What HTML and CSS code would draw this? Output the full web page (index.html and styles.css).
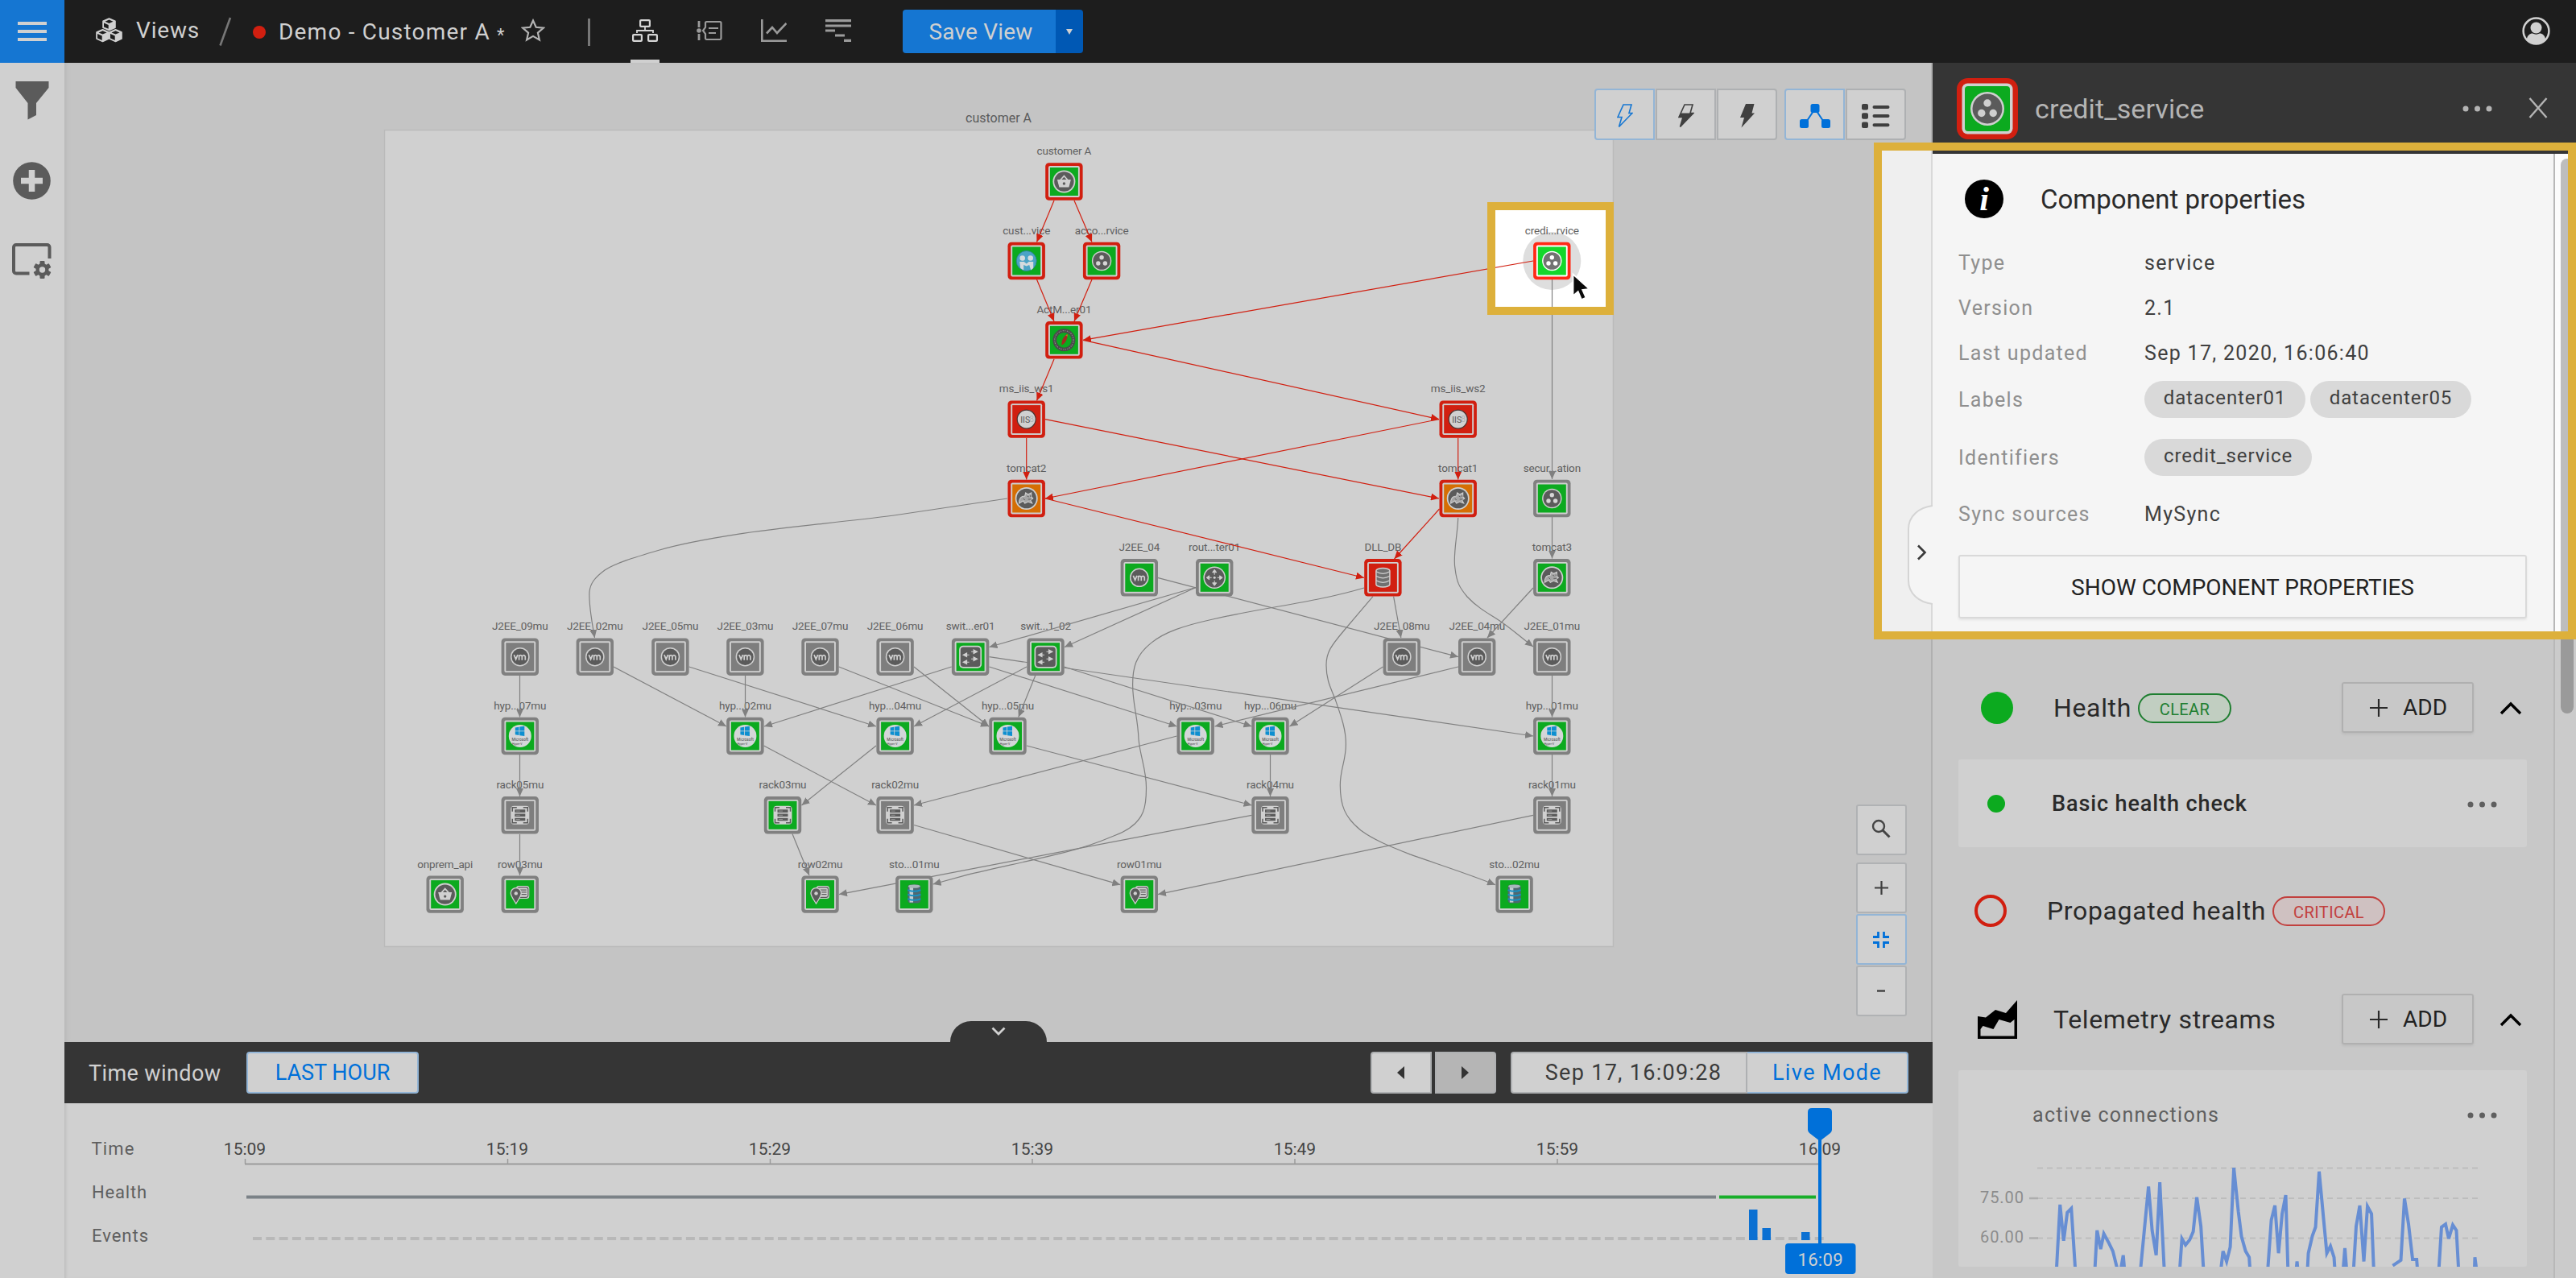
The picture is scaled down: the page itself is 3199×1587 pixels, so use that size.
FILE: index.html
```html
<!DOCTYPE html>
<html lang="en">
<head>
<meta charset="utf-8">
<title>Demo - Customer A</title>
<link rel="stylesheet" href="styles.css">
</head>
<body>
<header class="topbar">
  <button class="menu" aria-label="Menu"><span></span><span></span><span></span></button>
  <svg class="cubes" width="33" height="31" viewBox="0 0 33 31"><g fill="#d0d0d0" stroke="#d0d0d0" stroke-width="1.6" stroke-linejoin="round"><path d="M16.500 1l7.500 3.300v8l-7.500 3.300-7.500-3.300v-8z"/><path d="M8.500 14.700l7.500 3.300v8l-7.500 3.500L1 26v-8z"/><path d="M24.500 14.700l7.500 3.300v8l-7.500 3.500-7.500-3.500v-8z"/></g><g fill="#1d1d1d"><path d="M16.500 2.600l5 2.200-5 2.200-5-2.200zM10 6.500l5.700 2.500v4.800L10 11.500zM8.500 16.200l5 2.200-5 2.200-5-2.200zM2 20l5.700 2.500v5.500L2 25.500zM24.500 16.200l5 2.200-5 2.200-5-2.200zM18 20l5.700 2.500v5.500L18 25.500z"/></g></svg>
  <span class="views">Views</span>
  <svg class="slash" width="16" height="36" viewBox="0 0 16 36"><path d="M1.500 35.500L14 1" stroke="#777" stroke-width="2.600"/></svg>
  <span class="status-dot"></span>
  <span class="view-name">Demo - Customer A <small>*</small></span>
  <svg class="star" width="30" height="30" viewBox="0 0 30 30"><path d="M15 2.500l3.700 8.300 9 .9-6.800 6 2 8.800L15 21.900l-7.900 4.600 2-8.800-6.800-6 9-.9z" fill="none" stroke="#b4b4b4" stroke-width="2.200"/></svg>
  <span class="divider"></span>
  <nav class="tabs">
    <span class="tab active"><svg width="32" height="28" viewBox="0 0 32 28" fill="none" stroke="#d6d6d6" stroke-width="2.200"><rect x="10.100" y="1.100" width="11.800" height="7.800" rx="1"/><rect x="1.100" y="19.100" width="10.800" height="7.800" rx="1"/><rect x="20.100" y="19.100" width="10.800" height="7.800" rx="1"/><path d="M16 10v4M6 17v-3h20v3" stroke-width="1.800"/></svg></span>
    <span class="tab"><svg width="32" height="28" viewBox="0 0 32 28" fill="none" stroke="#9b9b9b" stroke-width="2.200"><path d="M3 2v8M3 18v8" stroke-width="2.800"/><circle cx="3" cy="14" r="2.800" fill="#9b9b9b" stroke="none"/><path d="M11 10V4.500a1.500 1.500 0 0 1 1.500-1.500H29a1.500 1.500 0 0 1 1.500 1.500v19a1.500 1.500 0 0 1-1.500 1.500H12.500a1.500 1.500 0 0 1-1.500-1.500V18l-3-4z"/><path d="M15 11h12M15 17h9"/></svg></span>
    <span class="tab"><svg width="32" height="28" viewBox="0 0 32 28" fill="none" stroke="#9b9b9b" stroke-width="2.600"><path d="M1.300 0v26.700H32"/><path d="M7 17.500l7-7.500 6 7L31.500 5"/></svg></span>
    <span class="tab"><svg width="32" height="28" viewBox="0 0 32 28" stroke="#9b9b9b" stroke-width="3.200"><path d="M0 1.600h32M0 8h32M0 14h12M12 20h12M23 26.300h9"/></svg></span>
  </nav>
  <div class="save"><span class="save-main">Save View</span><span class="save-more"><svg width="8" height="7" viewBox="0 0 8 7"><path d="M0 0h8L4 7z" fill="#d0d0d0"/></svg></span></div>
  <svg class="user" width="35" height="35" viewBox="0 0 35 35"><circle cx="17.500" cy="17.500" r="15.900" fill="none" stroke="#d0d0d0" stroke-width="2.500"/><circle cx="17.500" cy="13.500" r="7" fill="#d0d0d0"/><path d="M6 28c0-5 4-7.500 7-7.500 3 1.500 6 1.500 9 0 3 0 7 2.500 7 7.500-6 7-17 7-23 0z" fill="#d0d0d0"/></svg>
</header>

<div class="workspace">
  <aside class="sidebar">
    <svg width="42" height="48" viewBox="0 0 42 48"><path d="M.5 0h41v8L26 27v15l-10.500 5.500V27L.5 8z" fill="#5b5b5b"/></svg>
    <svg width="47" height="47" viewBox="0 0 47 47"><circle cx="23.500" cy="23.500" r="23.300" fill="#5b5b5b"/><path d="M23.500 10v27M10 23.500h27" stroke="#d0d0d0" stroke-width="7.500"/></svg>
    <svg width="49" height="44" viewBox="0 0 49 44"><path d="M21.500 37.500H5a3 3 0 0 1-3-3V5a3 3 0 0 1 3-3h38.500a3 3 0 0 1 3 3v14" fill="none" stroke="#5b5b5b" stroke-width="4"/><g transform="translate(37.500 33)" fill="#5b5b5b"><circle r="8"/><g id="teeth"><rect x="-3" y="-11" width="6" height="22" rx="1"/></g><use href="#teeth" transform="rotate(60)"/><use href="#teeth" transform="rotate(120)"/><circle r="3.700" fill="#d0d0d0"/></g></svg>
  </aside>

  <main class="center">
    <section class="canvas">
      <svg class="topology" width="2320" height="1216" viewBox="80 78 2320 1216">
        <defs>
          <marker id="ar" viewBox="0 0 10 9" refX="10" refY="4.500" markerWidth="10" markerHeight="9" markerUnits="userSpaceOnUse" orient="auto"><path d="M0 0l10 4.500L0 9z" fill="#d11f10"/></marker>
          <marker id="ag" viewBox="0 0 10 9" refX="10" refY="4.500" markerWidth="10" markerHeight="9" markerUnits="userSpaceOnUse" orient="auto"><path d="M0 0l10 4.500L0 9z" fill="#808080"/></marker>
          <g id="red"><rect x="-23.200" y="-23.200" width="46.400" height="46.400" rx="4.500" fill="#d11f10"/><rect x="-19.400" y="-19.400" width="38.800" height="38.800" rx="2" fill="#d0d0d0"/></g>
          <g id="gray"><rect x="-23.200" y="-23.200" width="46.400" height="46.400" rx="4.500" fill="#808080"/><rect x="-19.400" y="-19.400" width="38.800" height="38.800" rx="2" fill="#d0d0d0"/></g>
          <rect id="sq" x="-17.500" y="-17.500" width="35" height="35"/>
          <g id="gg"><use href="#gray"/><use href="#sq" fill="#0caa1f"/></g>
          <g id="gx"><use href="#gray"/><use href="#sq" fill="#7e7e7e"/></g>
          <g id="rg"><use href="#red"/><use href="#sq" fill="#0caa1f"/></g>
          <g id="rr"><use href="#red"/><use href="#sq" fill="#d11f10"/></g>
          <g id="ro"><use href="#red"/><use href="#sq" fill="#d56e04"/></g>
          <g id="vm"><circle r="11.800" fill="#d0d0d0"/><circle r="10.300" fill="#5b5b5b"/><path d="M-7.500-2.500l2.300 5.500 2.300-5.500M-1.200 4v-6.500M-1.200-.5q2-3 3.700 0V4M2.500-.5q2.200-3 4 0V4" fill="none" stroke="#d0d0d0" stroke-width="1.700"/></g>
          <g id="hv"><circle r="14" fill="#d4d6d8"/><path d="M-6-10.500l4.700-.8v4.800H-6zM-.5-11.400l6-.9v5.800h-6zM-6-5.700h4.700v4.800L-6-1.700zM-.5-5.700h6V.1l-6-.9z" fill="#0d8fd0"/><text y="6" class="tiny">Microsoft</text><text x="-3.500" y="10.500" class="tiny s">Hyper-V</text></g>
          <g id="rk"><rect x="-11.500" y="-11.500" width="23" height="23" rx="4" fill="#d0d0d0"/><path d="M-4-9.500h-5.500v5M4-9.500h5.500v5M-4 9.500h-5.500v-5M4 9.500h5.500v-5" fill="none" stroke="#5b5b5b" stroke-width="1.500"/><path d="M-6.500-5.200h13M-6.500 0h13M-6.500 5.200h13" stroke="#5b5b5b" stroke-width="3.600"/><path d="M-5-5.200h5M-5 0h5M-5 5.200h5" stroke="#b0b0b0" stroke-width=".7"/></g>
          <g id="bk"><circle r="14" fill="#d0d0d0"/><circle r="12.200" fill="#5b5b5b"/><path d="M-8.500-2.500h17L6 7H-6z" fill="#d0d0d0"/><path d="M-4.500-2L0-7l4.500 5" fill="none" stroke="#d0d0d0" stroke-width="1.700"/><circle cy="2.500" r="1.700" fill="#5b5b5b"/></g>
          <g id="sv"><circle r="12.200" fill="#d0d0d0"/><circle r="10.800" fill="#5b5b5b"/><g fill="#d6d6d6"><circle cy="-4.300" r="2.700"/><circle cx="-4.300" cy="3" r="2.700"/><circle cx="4.300" cy="3" r="2.700"/></g></g>
          <g id="rw"><rect x="-5" y="-10.500" width="16.500" height="16" rx="3.500" fill="#d0d0d0"/><rect x="-3" y="-8.800" width="13" height="12.500" rx="2.500" fill="none" stroke="#5b5b5b" stroke-width="1.200"/><path d="M0-5.500h8M0-2.800h8M0 0h8" stroke="#5b5b5b" stroke-width="1.300"/><path d="M-5 11.500C-9 5-11.500 2-11.500-1.500a6.500 6.500 0 0 1 13 0C1.500 2-1 5-5 11.500z" fill="#5b5b5b" stroke="#d0d0d0" stroke-width="1.300"/><circle cx="-5" cy="-1.200" r="2.200" fill="#d0d0d0"/></g>
          <g id="st"><rect x="-8" y="-12" width="16" height="23" rx="4" fill="#4f6871"/><path d="M-3.500-11v21" stroke="#c3cdd1" stroke-width="4.500"/><path d="M-8-5.500q8 3.500 16 0M-8 0q8 3.500 16 0M-8 5.500q8 3.500 16 0" fill="none" stroke="#1691c4" stroke-width="2"/><ellipse cy="-10" rx="7.500" ry="2.200" fill="#a9b7bb"/></g>
          <g id="db"><path d="M-8.500-8.500a8.500 3.200 0 0 1 17 0v17a8.500 3.200 0 0 1-17 0z" fill="#707070" stroke="#d0d0d0" stroke-width="1.500"/><path d="M-8.500-7.500q8.500 5 17 0M-8.500-2q8.500 5 17 0M-8.500 3.500q8.500 5 17 0" fill="none" stroke="#d0d0d0" stroke-width="1.300"/></g>
          <g id="sw"><rect x="-14" y="-14" width="28" height="28" rx="5" fill="#d0d0d0"/><rect x="-12.300" y="-12.300" width="24.600" height="24.600" rx="3.500" fill="#5b5b5b"/><path d="M1-6.500h3v-2.200L8.500-6.500 4-4.200v-2.300M1 2.500h3V.3l4.500 2.200L4 4.800V2.500M-1.500-2.500h-3v-2.200L-9-2.500l4.500 2.300v-2.300M-1.500 6.500h-3V4.300L-9 6.500l4.500 2.300V6.500" fill="#d0d0d0" stroke="#d0d0d0" stroke-width="1.100"/></g>
          <g id="rt"><circle r="13.800" fill="#d0d0d0"/><circle r="12.300" fill="#5b5b5b"/><circle r="1.500" fill="#d0d0d0"/><g id="rta"><path d="M0-3.500V-7M-2.500-6.500L0-10l2.500 3.500z" fill="#d0d0d0" stroke="#d0d0d0"/></g><use href="#rta" transform="rotate(90)"/><use href="#rta" transform="rotate(180)"/><use href="#rta" transform="rotate(270)"/></g>
          <g id="is"><circle r="11.500" fill="#d0d0d0" stroke="#4a3532" stroke-width="1.200"/><text x="-1.500" y="4" class="iis">IIS</text><text x="6.500" y="3.500" class="iis e">8</text></g>
          <g id="tc"><circle r="14" fill="#d0d0d0"/><circle r="12.300" fill="#5b5b5b"/><path d="M-9 3c1-5 4-6 7-6l1-4 3 2 4-2v5l2 2-3 2 2 4-5-2-4 2-2-3-5 3z" fill="#a6a6a6" stroke="#d0d0d0" stroke-width="1.100"/><path d="M1-3l2 1M5-4v2M-4 0l2 2M2 1h4" stroke="#5b5b5b" stroke-width="1"/></g>
          <g id="am"><circle r="11.700" fill="none" stroke="#4a4a4a" stroke-width="4.600"/><circle r="11.700" fill="none" stroke="#8b8b8b" stroke-width="1.200" stroke-dasharray="1.500 1.200 1 1.600"/><path d="M-3 6.500C-3.500 0 0-5 4-7.500 5-3 2 4-3 6.500z" fill="#a32a22"/><path d="M2-5.500L4-7.500l.5 3z" fill="#c67a20"/></g>
          <g id="cu"><circle r="12.500" fill="#4ba3c6" stroke="#2c7f8f" stroke-width=".8"/><g fill="#d4dadd"><circle cx="-5" cy="-3.500" r="3.300"/><circle cx="5" cy="-3.500" r="3.300"/><path d="M-8.500 1h5.500L0 3.500 3 1h5.500v8l-3 2.500L3.500 5 0 6.500-3.500 5v6.500l-4-2.500z"/></g></g>
        </defs>
        <rect x="477.500" y="161.500" width="1526" height="1014" fill="#d0d0d0" stroke="#bababa" stroke-width="1.500"/>
        <text x="1240" y="152" class="group-label">customer A</text>
        <rect x="1852" y="256" width="147" height="130" fill="#fff"/>
        <circle cx="1927.300" cy="324" r="36" fill="#dedede"/>
        <g class="labels">
          <text x="1321.400" y="192">customer A</text><text x="1274.700" y="290.500">cust...vice</text><text x="1368.100" y="290.500">acco...rvice</text><text x="1321.400" y="389">ActM...er01</text>
          <text x="1274.700" y="487">ms_iis_ws1</text><text x="1274.700" y="585.500">tomcat2</text><text x="1927.300" y="290.500">credi...rvice</text><text x="1810.700" y="487">ms_iis_ws2</text>
          <text x="1810.700" y="585.500">tomcat1</text><text x="1927.300" y="585.500">secur...ation</text>
          <text x="1414.800" y="684">J2EE_04</text><text x="1508" y="684">rout...ter01</text><text x="1717.400" y="684">DLL_DB</text><text x="1927.300" y="684">tomcat3</text>
          <text x="645.800" y="782">J2EE_09mu</text><text x="738.800" y="782">J2EE_02mu</text><text x="832.400" y="782">J2EE_05mu</text><text x="925.400" y="782">J2EE_03mu</text><text x="1018.500" y="782">J2EE_07mu</text><text x="1111.600" y="782">J2EE_06mu</text><text x="1205.100" y="782">swit...er01</text><text x="1298.500" y="782">swit...1_02</text><text x="1740.800" y="782">J2EE_08mu</text><text x="1834.200" y="782">J2EE_04mu</text><text x="1927.300" y="782">J2EE_01mu</text>
          <text x="645.800" y="880.500">hyp...07mu</text><text x="925.400" y="880.500">hyp...02mu</text><text x="1111.600" y="880.500">hyp...04mu</text><text x="1251.500" y="880.500">hyp...05mu</text><text x="1484.700" y="880.500">hyp...03mu</text><text x="1577.500" y="880.500">hyp...06mu</text><text x="1927.300" y="880.500">hyp...01mu</text>
          <text x="645.800" y="979">rack05mu</text><text x="972" y="979">rack03mu</text><text x="1111.600" y="979">rack02mu</text><text x="1577.500" y="979">rack04mu</text><text x="1927.300" y="979">rack01mu</text>
          <text x="552.700" y="1077.500">onprem_api</text><text x="645.800" y="1077.500">row03mu</text><text x="1018.500" y="1077.500">row02mu</text><text x="1135.300" y="1077.500">sto...01mu</text><text x="1414.800" y="1077.500">row01mu</text><text x="1880.600" y="1077.500">sto...02mu</text>
        </g>
        <g class="edges gray">
          <path d="M1927.500 347V595"/><path d="M1927.500 642V693.500"/>
          <path d="M1251 619C1200 627 1150 634 1110 640C1040 649 970 655 916 663.400C880 669 850 674 819 683C785 693 765 699 751 708C739 717 733 724 732 735C731 752 735 772 738.500 792"/>
          <path d="M1810.700 643C1810 665 1804 690 1807 706C1809 723 1812 729 1822 741C1832 752 1845 760 1858 768C1874 778 1888 791 1904 803"/>
          <path d="M1437.500 717.300L1811 815.700"/><path d="M1485 729.500L1228.500 803.500"/><path d="M1485 729.500L1322 803.500"/><path d="M1904 730L1847 792"/>
          <path d="M1694 730C1634 748 1570 754 1506 769C1470 777 1446 785 1429.600 798.400C1410 814 1406.600 830 1406.600 850C1406.600 875 1413 890 1414 918C1416 940 1423.500 955 1423.500 978C1423.500 992 1423 1000 1419.400 1008.500C1414 1022 1402 1031 1383.700 1037.800C1362 1047 1345 1053 1322.400 1058.400C1280 1069 1240 1077 1200 1086.700L1158.600 1098"/>
          <path d="M1705 740.600L1669 783C1653 802 1647 810 1647 826C1647 845 1653 855 1658 868C1665 888 1671.400 905 1671.400 924C1671.400 945 1664.300 955 1664.300 975C1664.300 1000 1670 1015 1689.800 1031C1706 1043 1726 1051 1751 1060.900C1785 1073 1820 1084 1857 1098.700"/>
          <path d="M1730.600 740.600L1739.800 792"/>
          <path d="M645.500 839V890.500"/><path d="M645.500 937V989"/><path d="M645.500 1036V1087"/>
          <path d="M762 828L902 902"/><path d="M855.700 828L1088 902"/><path d="M925.500 839V890.500"/><path d="M1041.700 828L1228 902"/><path d="M1135 828L1228 902"/>
          <path d="M1181.700 828L949 902"/><path d="M1228.500 815.700L1904 914"/><path d="M1228.500 828L1461.500 902"/><path d="M1275 828L1135 902"/><path d="M1285.700 839L1264.800 890.500"/><path d="M1321.500 828L1554.500 902"/>
          <path d="M1717.500 828L1601.500 902"/><path d="M1811 828L1508.500 902"/><path d="M1927.500 839V890.500"/><path d="M1927.500 937V989"/>
          <path d="M948.500 926L1088 1000"/><path d="M1088 926L995.500 1000"/><path d="M1275 926L1554.500 1000"/><path d="M1461.500 914L1135 1000"/><path d="M1577.500 937V989"/>
          <path d="M984 1035.500L1005 1087"/><path d="M1135 1024.500L1391.300 1098.700"/><path d="M1554.500 1012.300L1042 1110.600"/><path d="M1904 1012.300L1438 1110.600"/>
        </g>
        <g class="edges red">
          <path d="M1309 249L1287.500 300.500"/><path d="M1334 249L1356 300.500"/><path d="M1287.500 347L1309 399"/><path d="M1356 347L1334 399"/>
          <path d="M1904 324L1345 422.300"/><path d="M1345 422.300L1787 520.600"/><path d="M1309 446L1287.500 497.500"/><path d="M1274.700 544V595.500"/>
          <path d="M1298 520.600L1787 619"/><path d="M1787 520.600L1298 619"/><path d="M1810.700 544V595.500"/><path d="M1298 619L1694 717.500"/><path d="M1787.500 632L1731.600 694"/>
        </g>
        <g transform="translate(1321.400 225.500)"><use href="#rg"/><use href="#bk"/></g>
        <g transform="translate(1274.700 324)"><use href="#rg"/><use href="#cu"/></g>
        <g transform="translate(1368.100 324)"><use href="#rg"/><use href="#sv"/></g>
        <g transform="translate(1321.400 422.300)"><use href="#rg"/><use href="#am"/></g>
        <g transform="translate(1274.700 520.600)"><use href="#rr"/><use href="#is"/></g>
        <g transform="translate(1274.700 619)"><use href="#ro"/><use href="#tc"/></g>
        <g transform="translate(1810.700 520.600)"><use href="#rr"/><use href="#is"/></g>
        <g transform="translate(1810.700 619)"><use href="#ro"/><use href="#tc"/></g>
        <g transform="translate(1927.300 619)"><use href="#gg"/><use href="#sv"/></g>
        <g transform="translate(1414.800 717.300)"><use href="#gg"/><use href="#vm"/></g>
        <g transform="translate(1508.200 717.300)"><use href="#gg"/><use href="#rt"/></g>
        <g transform="translate(1717.400 717.300)"><use href="#rr"/><use href="#db"/></g>
        <g transform="translate(1927.300 717.300)"><use href="#gg"/><use href="#tc"/></g>
        <g transform="translate(645.800 815.700)"><use href="#gx"/><use href="#vm"/></g>
        <g transform="translate(738.800 815.700)"><use href="#gx"/><use href="#vm"/></g>
        <g transform="translate(832.400 815.700)"><use href="#gx"/><use href="#vm"/></g>
        <g transform="translate(925.400 815.700)"><use href="#gx"/><use href="#vm"/></g>
        <g transform="translate(1018.500 815.700)"><use href="#gx"/><use href="#vm"/></g>
        <g transform="translate(1111.600 815.700)"><use href="#gx"/><use href="#vm"/></g>
        <g transform="translate(1205.100 815.700)"><use href="#gg"/><use href="#sw"/></g>
        <g transform="translate(1298.500 815.700)"><use href="#gg"/><use href="#sw"/></g>
        <g transform="translate(1740.800 815.700)"><use href="#gx"/><use href="#vm"/></g>
        <g transform="translate(1834.200 815.700)"><use href="#gx"/><use href="#vm"/></g>
        <g transform="translate(1927.300 815.700)"><use href="#gx"/><use href="#vm"/></g>
        <g transform="translate(645.800 914)"><use href="#gg"/><use href="#hv"/></g>
        <g transform="translate(925.400 914)"><use href="#gg"/><use href="#hv"/></g>
        <g transform="translate(1111.600 914)"><use href="#gg"/><use href="#hv"/></g>
        <g transform="translate(1251.500 914)"><use href="#gg"/><use href="#hv"/></g>
        <g transform="translate(1484.700 914)"><use href="#gg"/><use href="#hv"/></g>
        <g transform="translate(1577.500 914)"><use href="#gg"/><use href="#hv"/></g>
        <g transform="translate(1927.300 914)"><use href="#gg"/><use href="#hv"/></g>
        <g transform="translate(645.800 1012.300)"><use href="#gx"/><use href="#rk"/></g>
        <g transform="translate(972 1012.300)"><use href="#gg"/><use href="#rk"/></g>
        <g transform="translate(1111.600 1012.300)"><use href="#gx"/><use href="#rk"/></g>
        <g transform="translate(1577.500 1012.300)"><use href="#gx"/><use href="#rk"/></g>
        <g transform="translate(1927.300 1012.300)"><use href="#gx"/><use href="#rk"/></g>
        <g transform="translate(552.700 1110.600)"><use href="#gg"/><use href="#bk"/></g>
        <g transform="translate(645.800 1110.600)"><use href="#gg"/><use href="#rw"/></g>
        <g transform="translate(1018.500 1110.600)"><use href="#gg"/><use href="#rw"/></g>
        <g transform="translate(1135.300 1110.600)"><use href="#gg"/><use href="#st"/></g>
        <g transform="translate(1414.800 1110.600)"><use href="#gg"/><use href="#rw"/></g>
        <g transform="translate(1880.600 1110.600)"><use href="#gg"/><use href="#st"/></g>
        <g transform="translate(1927.300 324)"><rect x="-23.200" y="-23.200" width="46.400" height="46.400" rx="4.500" fill="#ff2a16"/><rect x="-19.400" y="-19.400" width="38.800" height="38.800" rx="2" fill="#fff"/><use href="#sq" fill="#14d72b"/><circle r="12.200" fill="#fff"/><circle r="10.800" fill="#727272"/><g fill="#fff"><circle cy="-4.300" r="2.700"/><circle cx="-4.300" cy="3" r="2.700"/><circle cx="4.300" cy="3" r="2.700"/></g></g>
        <rect x="1852" y="256" width="147" height="130" fill="none" stroke="#ddb03b" stroke-width="10"/>
        <path d="M1953.500 340.500v27l6.200-5.500 4.300 10 5.500-2.300-4.300-9.800 8.500-1z" fill="#0a0a0a" stroke="#fff" stroke-width="1.800"/>
      </svg>

      <div class="view-tools">
        <div class="group">
          <span class="tool on"><svg width="20" height="30" viewBox="0 0 20 30"><path d="M8 1h10l-3 10.500h4L2.500 28.500 6 16.500H1z" fill="none" stroke="#1576d2" stroke-width="1.600"/></svg></span>
          <span class="tool"><svg width="20" height="30" viewBox="0 0 20 30"><path d="M8 1h10l-3 10.500h4L2.500 28.500 6 16.500H1z" fill="none" stroke="#3f3f3f" stroke-width="1.600"/><path d="M3.500 11.500H19L2.500 28.500 6 16.500H1z" fill="#3f3f3f"/></svg></span>
          <span class="tool"><svg width="20" height="30" viewBox="0 0 20 30"><path d="M8 0h10.500l-3 11.500H19L2.500 29.500 6 17H1z" fill="#3f3f3f"/></svg></span>
        </div>
        <div class="group">
          <span class="tool on"><svg width="38" height="30" viewBox="0 0 38 30"><path d="M7 24L19 6l12 18" fill="none" stroke="#0070d9" stroke-width="2"/><g fill="#0070d9"><rect x="13.500" width="11" height="11" rx="2.500"/><rect x="0" y="19" width="11" height="11" rx="2.500"/><rect x="27" y="19" width="11" height="11" rx="2.500"/></g></svg></span>
          <span class="tool"><svg width="35" height="30" viewBox="0 0 35 30" fill="#3f3f3f"><rect width="8" height="7.500" rx="2"/><rect y="11.300" width="8" height="7.500" rx="2"/><rect y="22.500" width="8" height="7.500" rx="2"/><path d="M15.500 4h17M15.500 15h17M15.500 26.300h17" stroke="#3f3f3f" stroke-width="4" stroke-linecap="round"/></svg></span>
        </div>
      </div>

      <div class="zoom-tools">
        <span class="ztool search"><svg width="24" height="24" viewBox="0 0 24 24" fill="none" stroke="#454545" stroke-width="2.400"><circle cx="9" cy="9" r="7"/><path d="M14 14l8.500 8.500" stroke-width="3"/></svg></span>
        <span class="ztool"><svg width="17" height="17" viewBox="0 0 17 17"><path d="M8.500 0v17M0 8.500h17" stroke="#3f3f3f" stroke-width="2.200"/></svg></span>
        <span class="ztool on"><svg width="20" height="20" viewBox="0 0 20 20"><path d="M6.500 0v6.500H0M13.500 0v6.500H20M6.500 20v-6.500H0M13.500 20v-6.500H20" fill="none" stroke="#0070d9" stroke-width="2.800"/></svg></span>
        <span class="ztool"><svg width="10" height="3" viewBox="0 0 10 3"><path d="M0 1.500h10" stroke="#3f3f3f" stroke-width="2.400"/></svg></span>
      </div>
      <div class="fold-down"><svg width="18" height="12" viewBox="0 0 18 12"><path d="M1.500 1.500L9 9l7.500-7.500" fill="none" stroke="#d0d0d0" stroke-width="2.800"/></svg></div>
    </section>

    <section class="timebar">
      <span class="tw">Time window</span>
      <span class="btn last-hour">LAST HOUR</span>
      <span class="btn step prev"><svg width="9" height="16" viewBox="0 0 9 16"><path d="M9 0v16L0 8z" fill="#333"/></svg></span>
      <span class="btn step next"><svg width="9" height="16" viewBox="0 0 9 16"><path d="M0 0v16l9-8z" fill="#333"/></svg></span>
      <span class="btn date">Sep 17, 16:09:28</span>
      <span class="btn live">Live Mode</span>
    </section>

    <section class="timeline">
      <svg width="2320" height="217" viewBox="80 1370 2320 217">
        <g class="tl-name"><text x="113.500" y="1434" textLength="53">Time</text><text x="114" y="1487.500" textLength="68">Health</text><text x="114" y="1541.500" textLength="70">Events</text></g>
        <g class="tl-time"><text x="304" y="1433.500">15:09</text><text x="630" y="1433.500">15:19</text><text x="956" y="1433.500">15:29</text><text x="1282" y="1433.500">15:39</text><text x="1608" y="1433.500">15:49</text><text x="1934" y="1433.500">15:59</text><text x="2260" y="1433.500">16:09</text></g>
        <path d="M304 1445.500H2259" stroke="#9b9b9b" stroke-width="2"/>
        <path d="M304.500 1439v6M630.500 1439v6M956.500 1439v6M1282 1439v6M1608 1439v6M1934 1439v6" stroke="#9b9b9b" stroke-width="1.500"/>
        <path d="M306 1486.500H2131" stroke="#7b8287" stroke-width="4"/>
        <path d="M2135 1486.500H2255" stroke="#18ae2a" stroke-width="4"/>
        <path d="M314 1538H2265" stroke="#b8b8b8" stroke-width="4" stroke-dasharray="11 5.300"/>
        <path d="M2172 1502h10.500v38H2172zM2188.500 1525H2199v15h-10.500zM2237 1530h10.500v10H2237z" fill="#0b70d2"/>
        <path d="M2260 1410v136" stroke="#0070d9" stroke-width="4"/>
        <path d="M2250 1376h20q5 0 5 5v22q0 2-2 4l-13 10-13-10q-2-2-2-4v-22q0-5 5-5z" fill="#0070d9"/>
        <rect x="2217" y="1544" width="87.500" height="38" rx="4" fill="#0070d9"/>
        <text x="2260.500" y="1572" class="now" textLength="56">16:09</text>
      </svg>
    </section>
  </main>

  <aside class="panel">
    <header class="panel-head">
      <svg class="badge" width="76" height="76" viewBox="0 0 76 76"><rect width="76" height="76" rx="14" fill="#d11f10"/><rect x="6.500" y="6.500" width="63" height="63" rx="7" fill="#d0d0d0"/><rect x="10" y="10" width="56" height="56" rx="4" fill="#0caa1f"/><circle cx="38" cy="38" r="21" fill="#d0d0d0"/><circle cx="38" cy="38" r="18.500" fill="#5b5b5b"/><g fill="#d0d0d0"><circle cx="38" cy="31" r="4.700"/><circle cx="30.800" cy="43.500" r="4.700"/><circle cx="45.200" cy="43.500" r="4.700"/></g></svg>
      <h1>credit_service</h1>
      <svg width="37" height="8" viewBox="0 0 37 8" fill="#b4b4b4"><circle cx="4" cy="4" r="3.500"/><circle cx="18.500" cy="4" r="3.500"/><circle cx="33" cy="4" r="3.500"/></svg>
      <svg class="close" width="24" height="26" viewBox="0 0 24 26"><path d="M1.500 1l21 24M22.500 1l-21 24" stroke="#b4b4b4" stroke-width="2.400"/></svg>
    </header>
    <div class="panel-body">
      <div class="props">
        <div class="title-row"><svg width="48" height="48" viewBox="0 0 48 48"><circle cx="24" cy="24" r="24"/><text x="24" y="38" class="info-i">i</text></svg><h2>Component properties</h2></div>
        <dl>
          <dt>Type</dt><dd>service</dd>
          <dt>Version</dt><dd>2.1</dd>
          <dt>Last updated</dt><dd>Sep 17, 2020, 16:06:40</dd>
          <dt>Labels</dt><dd><span class="chip">datacenter01</span><span class="chip">datacenter05</span></dd>
          <dt>Identifiers</dt><dd><span class="chip id">credit_service</span></dd>
          <dt>Sync sources</dt><dd>MySync</dd>
        </dl>
        <div class="show-btn">SHOW COMPONENT PROPERTIES</div>
      </div>
      <div class="health">
        <div class="row">
          <span class="dot big"></span><span class="row-title">Health</span><span class="pill clear">CLEAR</span>
          <span class="add"><svg width="22" height="22" viewBox="0 0 22 22"><path d="M11 0v22M0 11h22" stroke="#2a2a2a" stroke-width="2.200"/></svg>ADD</span>
          <svg class="chev" width="28" height="17" viewBox="0 0 28 17"><path d="M2 15L14 3l12 12" fill="none" stroke="#000" stroke-width="3.400"/></svg>
        </div>
        <div class="card check"><span class="dot small"></span><b>Basic health check</b><svg width="37" height="8" viewBox="0 0 37 8" fill="#5f5f5f"><circle cx="4" cy="4" r="3.500"/><circle cx="18.500" cy="4" r="3.500"/><circle cx="33" cy="4" r="3.500"/></svg></div>
        <div class="row prop"><span class="ring"></span><span class="row-title">Propagated health</span><span class="pill critical">CRITICAL</span></div>
        <div class="row tele">
          <svg class="area" width="49" height="48" viewBox="0 0 49 48"><path d="M0 20l10 1.500L22 12l13 4L49 0v48H0zM3.500 36v8.500h42V24l-5 4-14-4-7 12-13-4z" fill-rule="evenodd"/></svg><span class="row-title">Telemetry streams</span>
          <span class="add"><svg width="22" height="22" viewBox="0 0 22 22"><path d="M11 0v22M0 11h22" stroke="#2a2a2a" stroke-width="2.200"/></svg>ADD</span>
          <svg class="chev" width="28" height="17" viewBox="0 0 28 17"><path d="M2 15L14 3l12 12" fill="none" stroke="#000" stroke-width="3.400"/></svg>
        </div>
        <div class="card stream">
          <div class="stream-head"><span>active connections</span><svg width="37" height="8" viewBox="0 0 37 8" fill="#5f5f5f"><circle cx="4" cy="4" r="3.500"/><circle cx="18.500" cy="4" r="3.500"/><circle cx="33" cy="4" r="3.500"/></svg></div>
          <svg class="chart" width="705" height="134" viewBox="2432 1440 705 134">
            <path d="M2530 1451.500H3082M2530 1489H3082M2530 1538.500H3082" stroke="#bdbdbd" stroke-width="2" stroke-dasharray="7 5"/>
            <path d="M2520 1489h11M2520 1538.500h11" stroke="#adadad" stroke-width="2.500"/>
            <text x="2459" y="1494.500" textLength="54">75.00</text><text x="2459" y="1543.500" textLength="54">60.00</text>
            <g transform="matrix(.5606 0 0 .5147 2320 780)"><path class="series" d="M417 1553L425 1393L433 1480L441 1412L450 1402L459 1553M502 1553L507 1455L515 1500L522 1463L533 1485L542 1505L553 1553M559 1553L565 1515L568 1553M603 1553L621 1349L629 1455L638 1515L646 1339L656 1553M690 1553L695 1475L703 1490L712 1478L720 1458L728 1375L737 1445L743 1553M781 1553L786 1505L794 1530L802 1495L810 1304L820 1410L827 1470L836 1505L844 1520L846 1553M885 1553L893 1430L901 1395L909 1510L917 1415L925 1370L930 1553M948 1553L950 1530L952 1553M973 1553L975 1510L984 1468L991 1447L999 1313L1009 1430L1016 1510L1024 1493L1032 1520L1034 1553M1052 1553L1056 1498L1060 1553M1075 1553L1081 1445L1089 1395L1098 1530L1106 1397L1115 1415L1120 1553M1162 1540L1180 1527L1188 1378L1197 1440L1206 1525L1215 1525L1217 1553M1264 1553L1270 1447L1279 1440L1286 1475L1295 1442L1303 1455L1308 1553M1343 1553L1344 1520L1348 1553"/></g>
          </svg>
        </div>
      </div>
      <div class="gutter"><span class="thumb"></span></div>
    </div>
    <div class="spotlight"><svg class="fold" width="31" height="124" viewBox="0 0 31 124"><path d="M31 1C14 3 1 14 1 30v64c0 16 13 27 30 29" fill="#f5f5f5" stroke="#d4d4d4" stroke-width="2"/><path d="M13 50.500L21.500 59 13 67.500" fill="none" stroke="#3a3a3a" stroke-width="2.600"/></svg></div>
    <div class="spot-frame"></div>
  </aside>
</div>
</body>
</html>
```
FILE: styles.css
```css
* { box-sizing: border-box; }
body { margin: 0; width: 3199px; height: 1587px; overflow: hidden; background: #c4c4c4; font-family: Roboto, "Liberation Sans", sans-serif; color: #2a2a2a; }
svg { display: block; flex: none; }
span, h1, h2, b { white-space: nowrap; }

/* top bar */
.topbar { height: 78px; background: #1d1d1d; display: flex; align-items: center; color: #d0d0d0; font-size: 28px; }
.menu { width: 80px; height: 78px; padding: 0; border: 0; background: #1576d2; display: flex; flex-direction: column; justify-content: center; align-items: center; gap: 6px; }
.menu span { width: 36px; height: 4px; background: #d0d0d0; }
.cubes { margin: -4px 0 0 39px; }
.views { width: 86px; margin: -3px 0 0 17px; letter-spacing: .8px; }
.slash { margin-left: 17px; }
.status-dot { width: 16px; height: 16px; border-radius: 50%; background: #d11f10; margin: 2px 0 0 26px; }
.view-name { width: 285px; margin: 1px 0 0 16px; letter-spacing: 1.2px; }
.view-name small { font-size: 22px; position: relative; top: 2px; }
.star { margin: -2px 0 0 16px; }
.divider { width: 3px; height: 34px; background: #777; margin: 2px 0 0 53px; }
.tabs { display: flex; height: 78px; margin-left: 50px; gap: 44px; }
.tab { width: 36px; display: flex; align-items: center; justify-content: center; padding-top: 2px; border-bottom: 4px solid transparent; }
.tab.active { border-color: #d0d0d0; }
.save { width: 224px; height: 54px; display: flex; margin-left: 62px; border-radius: 4px; overflow: hidden; }
.save-main { width: 190px; background: #1576d2; line-height: 56px; text-align: center; letter-spacing: .2px; padding-left: 4px; }
.save-more { flex: 1; background: #0058b4; display: flex; align-items: center; justify-content: center; }
.user { margin: -2px 32px 0 auto; }

.workspace { display: flex; height: 1509px; }
.sidebar { width: 80px; background: #d0d0d0; display: flex; flex-direction: column; align-items: center; padding: 23px 1px 0 0; }
.sidebar svg:nth-child(2) { margin-top: 52px; }
.sidebar svg:nth-child(3) { margin-top: 54px; }
.center { width: 2320px; display: flex; flex-direction: column; }

/* topology canvas */
.canvas { position: relative; height: 1216px; background: #c4c4c4; box-shadow: inset 5px 0 6px -4px #b2b2b2, inset -2px 0 0 #b0b0b0; }
.group-label { font-size: 16px; fill: #5b5b5b; text-anchor: middle; }
.labels text { font-size: 13.500px; fill: #5f5f5f; text-anchor: middle; letter-spacing: -.15px; }
.tiny { font-size: 4.800px; fill: #444; text-anchor: middle; }
.tiny.s { font-size: 3.600px; }
.iis { font-size: 10.500px; fill: #555; text-anchor: middle; }
.iis.e { fill: #b0b0b0; }
.edges path { fill: none; stroke-width: 1.200; }
.edges.gray path { stroke: #808080; marker-end: url(#ag); }
.edges.red path { stroke: #d11f10; marker-end: url(#ar); }

.view-tools { position: absolute; left: 1900px; top: 32px; display: flex; gap: 9px; }
.group { display: flex; gap: 1px; }
.tool { width: 75px; height: 64px; border: 2px solid #aeb0b2; background: #d0d0d0; display: flex; align-items: center; justify-content: center; padding-top: 4px; }
.tool:first-child { border-radius: 4px 0 0 4px; }
.tool:last-child { border-radius: 0 4px 4px 0; }
.tool.on, .ztool.on { border-color: #93b5d6; }
.zoom-tools { position: absolute; left: 2225px; top: 921px; display: flex; flex-direction: column; gap: 1px; }
.ztool { width: 63px; height: 63px; border: 2px solid #b0b2b4; border-radius: 3px; background: #d0d0d0; display: flex; align-items: center; justify-content: center; padding-right: 1px; }
.search { margin-bottom: 8px; padding: 0 2px 4px 0; }
.fold-down { position: absolute; left: 1100px; top: 1190px; width: 120px; height: 26px; background: #353535; border-radius: 26px 26px 0 0; display: flex; justify-content: center; padding-top: 7px; }

/* time window bar */
.timebar { height: 76px; background: #353535; display: flex; align-items: center; font-size: 27px; color: #3a3a3a; padding-left: 30px; }
.tw { color: #d0d0d0; width: 165px; letter-spacing: .4px; padding-top: 1px; }
.btn { height: 52px; line-height: 49px; border: 2px solid #aeb0b2; background: #d0d0d0; text-align: center; }
.last-hour { margin-left: 31px; width: 214px; border-color: #93b5d6; border-radius: 4px; color: #0070d9; }
.step { width: 76px; display: flex; align-items: center; justify-content: center; padding-right: 1px; }
.prev { margin-left: 1182px; border-radius: 4px 0 0 4px; }
.next { margin-left: 4px; background: #b5b5b5; border-radius: 0 4px 4px 0; }
.date { margin-left: 18px; width: 294px; border-radius: 4px 0 0 4px; padding-left: 11px; letter-spacing: 1.3px; }
.live { width: 200px; border-color: #93b5d6; border-left: 0; color: #0070d9; border-radius: 0 4px 4px 0; letter-spacing: 1.4px; }

.timeline { height: 217px; background: #d0d0d0; box-shadow: inset 4px 0 5px -4px #aaa; }
.tl-name { font-size: 22px; fill: #5f5f5f; }
.tl-time { font-size: 21px; fill: #444; text-anchor: middle; }
.now { font-size: 22px; fill: #d0d0d0; text-anchor: middle; }

/* details panel */
.panel { position: relative; width: 799px; background: #c8c8c8; }
.panel-head { height: 113px; background: #353535; display: flex; align-items: center; padding-left: 30px; color: #b4b4b4; }
.panel-head h1 { width: 531px; margin: 0 0 0 21px; font-size: 34px; font-weight: 400; letter-spacing: .1px; }
.close { margin: -1px 0 0 45px; }
.panel-body { position: relative; display: grid; grid-template-columns: 771px 28px; grid-template-rows: 597px 1fr; height: 1396px; }
.props { background: #f5f5f5; padding: 28px 33px 0 32px; }
.title-row { height: 56px; display: flex; align-items: center; margin-bottom: 23px; padding-left: 8px; }
h2 { margin: 0 0 0 46px; font-size: 33px; font-weight: 400; }
.info-i { font: italic bold 42px "Liberation Serif", serif; fill: #fff; text-anchor: middle; }
dl { margin: 0; display: grid; grid-template-columns: 231px 1fr; grid-template-rows: 56px 56px 56px 72px 72px 57px; font-size: 25px; }
dt, dd { margin: 0; display: flex; align-items: center; letter-spacing: 1.3px; }
dt { color: #8f8f8f; }
dd { color: #3f3f3f; gap: 6px; }
dl > :nth-child(n+7):nth-child(-n+10) { padding-bottom: 12px; }
.chip { height: 46px; line-height: 43px; border-radius: 23px; background: #d9d9d9; width: 200px; text-align: center; font-size: 24px; letter-spacing: .9px; }
.chip.id { width: 208px; }
.show-btn { margin-top: 22px; height: 79px; width: 706px; border: 2px solid #d9d9d9; border-radius: 3px; text-align: center; line-height: 77px; font-size: 28px; box-shadow: 0 2px 3px #e4e4e4; color: #222; }

.health { grid-column: 1; padding: 59px 0 0 32px; }
.row { height: 63px; display: flex; align-items: center; font-size: 32px; width: 706px; }
.row-title { letter-spacing: .65px; }
.dot { border-radius: 50%; background: #0caa1f; flex: none; }
.big { width: 40px; height: 40px; margin: 0 50px 0 28px; }
.small { width: 22px; height: 22px; margin: 0 58px 0 36px; }
.ring { width: 40px; height: 40px; border: 4px solid #d11f10; border-radius: 50%; margin: 0 50px 0 20px; }
.pill { height: 37px; line-height: 37px; border-radius: 19px; border: 2px solid; font-size: 20px; text-align: center; margin: 2px 0 0 8px; letter-spacing: .4px; }
.clear { width: 116px; color: #1f7f31; background: #c1cec1; }
.critical { width: 140px; color: #c2403e; background: #cfc1c1; }
.add { margin-left: auto; width: 164px; height: 63px; border: 2px solid #b0b0b0; border-radius: 3px; box-shadow: 0 2px 3px #bbb; display: flex; align-items: center; gap: 19px; padding-left: 33px; font-size: 28px; color: #222; }
.chev { margin: 2px 6px 0 32px; }
.card { width: 706px; background: #d0d0d0; border-radius: 3px; }
.check { height: 109px; margin-top: 33px; display: flex; align-items: center; }
.check b { font-weight: 500; font-size: 27px; letter-spacing: .9px; }
.check svg { margin: 3px 37px 0 auto; }
.prop { margin-top: 47px; }
.tele { margin-top: 72px; }
.area { margin: 0 45px 0 24px; }
.stream { margin-top: 32px; height: 244px; overflow: hidden; }
.stream-head { height: 110px; display: flex; align-items: center; justify-content: space-between; padding: 1px 37px 0 92px; font-size: 25px; color: #5f5f5f; letter-spacing: 1.3px; }
.chart text { font-size: 20px; fill: #8c8c8c; }
.series { fill: none; stroke: #678ed3; stroke-width: 4; vector-effect: non-scaling-stroke; stroke-linejoin: miter; }
.gutter { grid-column: 2; grid-row: 1 / 3; border-left: 2px solid #b8b8b8; background: linear-gradient(#fcfcfc 597px, #cbcbcb 597px); }
.thumb { display: block; margin: 6px 0 0 7px; width: 16px; height: 689px; border-radius: 8px; background: linear-gradient(#bdbdbd 590px, #9a9a9a 590px); }

/* guided-tour spotlight over the canvas edge and the properties */
.spotlight { position: absolute; left: -73px; top: 99px; width: 73px; height: 616px; background: #efefef; border-right: 2px solid #d9d9d9; display: flex; justify-content: flex-end; padding-top: 450px; }
.fold { margin-right: -2px; }
.spot-frame { position: absolute; left: -73px; top: 99px; width: 872px; height: 617px; border: 10px solid #ddb03b; }
```
